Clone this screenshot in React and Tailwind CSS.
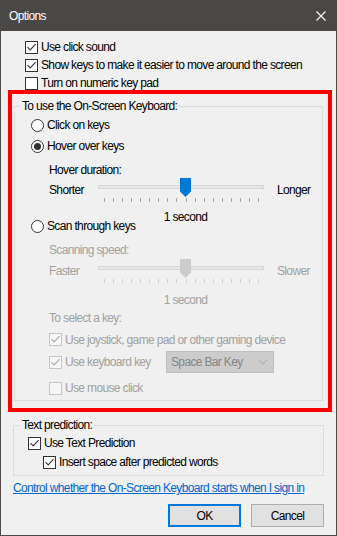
import React from "react";

const ticks = Array.from({ length: 18 }, (_, i) => Math.round(6 + i * 9.06));

function Check({ checked, disabled }) {
  return (
    <span
      className={`flex h-[13px] w-[13px] shrink-0 items-center justify-center border ${
        disabled ? "border-[#c6c6c6] bg-[#f6f6f6]" : "border-[#333333] bg-white"
      }`}
    >
      {checked && (
        <svg width="11" height="11" viewBox="0 0 11 11">
          <path
            d="M1.5 5.2 L4.2 7.9 L9.6 2.2"
            fill="none"
            stroke={disabled ? "#a8a8a8" : "#333333"}
            strokeWidth="1.1"
          />
        </svg>
      )}
    </span>
  );
}

function Radio({ checked }) {
  return (
    <span className="flex h-[13px] w-[13px] shrink-0 items-center justify-center rounded-full border border-[#333333] bg-white">
      {checked && <span className="h-[7px] w-[7px] rounded-full bg-[#333333]" />}
    </span>
  );
}

function Slider({ left, right, disabled, className = "" }) {
  return (
    <div className={`ml-[18px] flex h-[30px] items-start ${disabled ? "text-[#a0a0a0]" : "text-black"} ${className}`}>
      <span className="mt-[4px] w-[49px] leading-[16px]">{left}</span>
      <div className="relative h-[30px] w-[166px]">
        <div className="absolute left-0 right-0 top-[7px] h-[4px] border border-[#d6d6d6] bg-[#e7e7e7]" />
        <svg className="absolute left-0 top-[20px]" width="166" height="5">
          {ticks.map((x) => (
            <rect key={x} x={x} y="0" width="1" height="4" fill={disabled ? "#cfcfcf" : "#a6a6a6"} />
          ))}
        </svg>
        <svg className="absolute left-[82px] top-0" width="11" height="19" viewBox="0 0 11 19">
          <path d="M0 0H11V13.5L5.5 19L0 13.5Z" fill={disabled ? "#cccccc" : "#0078d7"} />
        </svg>
      </div>
      <span className="ml-[13px] mt-[4px] leading-[16px]">{right}</span>
    </div>
  );
}

function CheckRow({ checked, disabled, children, className = "" }) {
  return (
    <div className={`flex items-center gap-[3px] ${disabled ? "text-[#a0a0a0]" : "text-black"} ${className}`}>
      <Check checked={checked} disabled={disabled} />
      <span className="leading-[16px]">{children}</span>
    </div>
  );
}

function RadioRow({ checked, children, className = "" }) {
  return (
    <div className={`flex items-center gap-[3px] ${className}`}>
      <Radio checked={checked} />
      <span className="leading-[16px]">{children}</span>
    </div>
  );
}

export default function App() {
  return (
    <div className="flex h-[536px] w-[337px] flex-col bg-[#4d4b49] text-[12px] tracking-[-0.65px] text-black [font-family:'Liberation_Sans',Arial,sans-serif]">
      {/* title bar */}
      <div className="flex h-[31px] shrink-0 items-center justify-between bg-[#4a4846] pl-[9px] pr-[11px] pt-[1px]">
        <span className="text-white">Options</span>
        <svg width="10" height="10" viewBox="0 0 10 10">
          <path d="M0.5 0.5L9.5 9.5M9.5 0.5L0.5 9.5" stroke="white" strokeWidth="1.1" />
        </svg>
      </div>

      <div className="mx-[1px] mb-[1px] flex flex-1 flex-col bg-[#f0f0f0] pt-[7px]">
        <div className="pl-[24px]">
          <CheckRow checked className="h-[18px]">Use click sound</CheckRow>
          <CheckRow checked className="h-[18px]">Show keys to make it easier to move around the screen</CheckRow>
          <CheckRow className="h-[18px]">Turn on numeric key pad</CheckRow>
        </div>

        {/* highlighted group */}
        <div className="-mt-[2px] ml-[7px] w-[324px] border-4 border-[#ff0000] pb-[7px] pl-[2px] pr-[5px] pt-[4px]">
          <fieldset className="border border-[#dcdcdc]">
            <legend className="ml-[5px] px-[2px] leading-[16px]">To use the On-Screen Keyboard:</legend>
            <div className="pb-[2px] pl-[16px] pt-[1px]">
              <RadioRow className="h-[20px]">Click on keys</RadioRow>
              <RadioRow checked className="h-[22px]">Hover over keys</RadioRow>
              <div className="ml-[18px] mt-[5px] h-[16px] leading-[16px]">Hover duration:</div>
              <Slider left="Shorter" right="Longer" />
              <div className="ml-[67px] mt-[1px] h-[16px] w-[175px] text-center leading-[16px]">1 second</div>
              <RadioRow className="-mt-[9px] h-[20px]">Scan through keys</RadioRow>
              <div className="ml-[18px] mt-[6px] h-[16px] leading-[16px] text-[#a0a0a0]">Scanning speed:</div>
              <Slider left="Faster" right="Slower" disabled className="mt-[1px]" />
              <div className="ml-[67px] mt-[3px] h-[16px] w-[175px] text-center leading-[16px] text-[#a0a0a0]">
                1 second
              </div>
              <div className="ml-[18px] mt-[2px] h-[16px] leading-[16px] text-[#a0a0a0]">To select a key:</div>
              <div className="ml-[18px]">
                <CheckRow checked disabled className="mt-[3px] h-[21px]">
                  Use joystick, game pad or other gaming device
                </CheckRow>
                <div className="flex h-[24px] items-center">
                  <CheckRow checked disabled className="w-[117px]">
                    Use keyboard key
                  </CheckRow>
                  <div className="flex h-[22px] w-[108px] items-center justify-between border border-[#bfbfbf] bg-[#cccccc] pl-[4px] pr-[5px] text-[#858585]">
                    <span className="leading-[16px]">Space Bar Key</span>
                    <svg width="10" height="6" viewBox="0 0 10 6">
                      <path d="M0.5 0.5L5 5L9.5 0.5" fill="none" stroke="#a9a9a9" strokeWidth="1" />
                    </svg>
                  </div>
                </div>
                <CheckRow disabled className="mt-[4px] h-[20px]">
                  Use mouse click
                </CheckRow>
              </div>
            </div>
          </fieldset>
        </div>

        {/* text prediction */}
        <fieldset className="ml-[12px] mt-[5px] w-[311px] border border-[#dcdcdc]">
          <legend className="ml-[6px] px-[2px] leading-[16px]">Text prediction:</legend>
          <div className="pb-[4px] pl-[14px]">
            <CheckRow checked className="h-[20px]">Use Text Prediction</CheckRow>
            <CheckRow checked className="ml-[15px] h-[18px]">Insert space after predicted words</CheckRow>
          </div>
        </fieldset>

        <div className="ml-[12px] mt-[4px] h-[16px] leading-[16px]">
          <span className="text-[#0066cc] underline">Control whether the On-Screen Keyboard starts when I sign in</span>
        </div>

        <div className="mt-[8px] flex justify-end gap-[10px] pr-[12px]">
          <button className="flex h-[23px] w-[73px] items-center justify-center border-2 border-[#0078d7] bg-[#e1e1e1]">
            OK
          </button>
          <button className="flex h-[23px] w-[73px] items-center justify-center border border-[#adadad] bg-[#e1e1e1]">
            Cancel
          </button>
        </div>
      </div>
    </div>
  );
}
